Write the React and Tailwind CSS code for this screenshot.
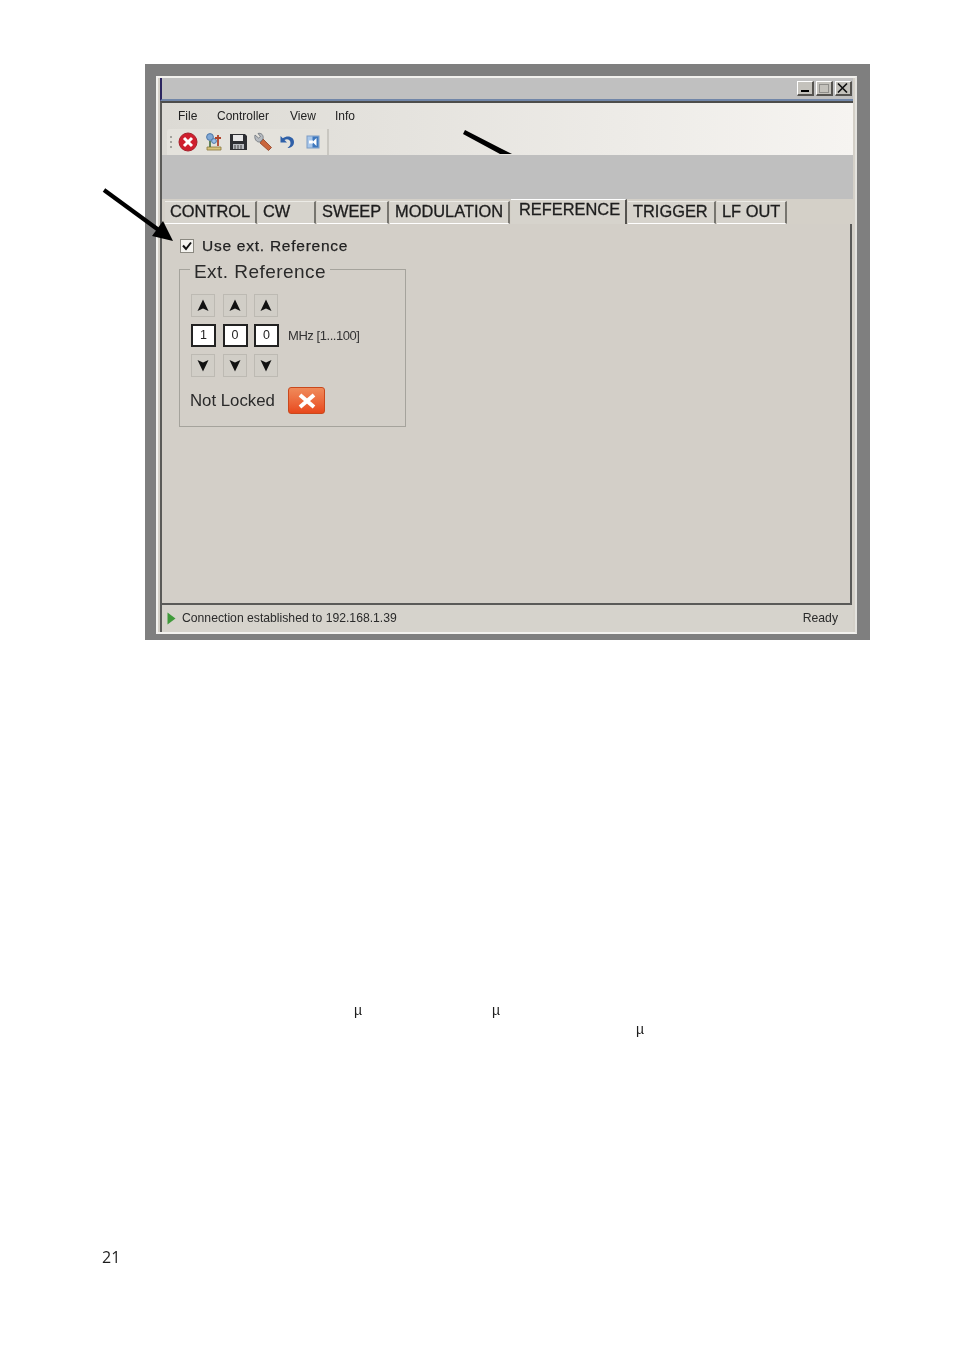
import React from "react";

const ui = { fontFamily: '"Liberation Sans", Arial, sans-serif' };

function Tab({ label, w, active, pl = "pl-[5px]" }) {
  return (
    <div
      className={`flex shrink-0 items-center ${pl} ${
        active
          ? "h-[27px] -mt-[2px] self-start bg-[#d6d3cc] border-r-2 border-r-[#55534f] border-t border-t-white pb-[8px]"
          : "h-[23px] bg-[#d6d3cc] border-r-2 border-r-[#77756f] border-t border-t-[#ecebe6] border-b border-b-white pb-[2px]"
      } text-[16.4px] text-[#1d1d1d] [-webkit-text-stroke:0.3px_#1d1d1d]`}
      style={{ width: w }}
    >
      {label}
    </div>
  );
}

function Arrow({ down }) {
  return (
    <div className="flex h-[23px] w-[24px] items-center justify-center border border-[#bdbab3] bg-[#d1cec7]">
      <svg width="12" height="13" viewBox="0 0 12 13">
        <path
          d={down ? "M0.5 1 L6 3.5 L11.5 1 L6 12.5 Z" : "M0.5 12 L6 9.5 L11.5 12 L6 0.5 Z"}
          fill="#111"
        />
      </svg>
    </div>
  );
}

function Digit({ v }) {
  return (
    <div className="flex h-[23px] w-[25px] items-center justify-center border-2 border-[#222] bg-white text-[12.5px] text-[#222]">
      {v}
    </div>
  );
}

function WinBtn({ children }) {
  return (
    <div className="flex h-[15px] w-[17.5px] items-center justify-center border-r-2 border-b-2 border-r-[#55534f] border-b-[#55534f] border-t border-l border-t-white border-l-white bg-[#c4c2bc]">
      {children}
    </div>
  );
}

function Toolbar() {
  return (
    <div className="flex h-[26px] w-[162px] items-center gap-[5px] rounded-tl-[3px] border-r-2 border-r-[#c9c7c1] bg-[#e4e2dc] pl-[2px]">
      <svg width="4" height="18" viewBox="0 0 4 18">
        <circle cx="2" cy="4" r="1" fill="#8c8b87" />
        <circle cx="2" cy="9" r="1" fill="#8c8b87" />
        <circle cx="2" cy="14" r="1" fill="#8c8b87" />
      </svg>
      <svg width="20" height="20" viewBox="0 0 20 20">
        <circle cx="10" cy="10" r="9" fill="#cf1f2e" stroke="#a5202a" />
        <path d="M6 6 L14 14 M14 6 L6 14" stroke="#fff" strokeWidth="3" />
      </svg>
      <svg width="20" height="20" viewBox="0 0 20 20" className="ml-[1px]">
        <circle cx="6" cy="5" r="3.4" fill="#7fa8d6" stroke="#4f78a8" />
        <circle cx="10" cy="9" r="2.4" fill="#9cc0e6" stroke="#4f78a8" />
        <path d="M14 3 V14 M11 6 H17" stroke="#b0442c" strokeWidth="1.8" />
        <path d="M3 18 H17 V15 H3 Z" fill="#d8c27a" stroke="#8b7a3c" strokeWidth="0.8" />
        <path d="M6 9 V15" stroke="#3e6b3a" strokeWidth="1.6" />
      </svg>
      <svg width="19" height="18" viewBox="0 0 19 18">
        <path d="M1 1 H16 L18 3 V17 H1 Z" fill="#2d2f33" />
        <rect x="4" y="2" width="10" height="6" fill="#e8e8e8" />
        <rect x="4" y="11" width="11" height="5" fill="#b8bbc0" />
        <path d="M6 12 V16 M9 12 V16 M12 12 V16" stroke="#444" />
      </svg>
      <svg width="20" height="20" viewBox="0 0 20 20">
        <path d="M7 11 L15.5 18.5 L18.5 15.5 L10 7 Z" fill="#c9653c" stroke="#8f3f22" strokeWidth="0.8" />
        <path d="M2 3 L5.5 6 L7.5 4.5 L5 1.5 C8 0.5 11 3 10 7 L7 10 C3.5 10.5 1 7 2 3 Z" fill="#b5bac0" stroke="#6c7278" strokeWidth="0.8" />
      </svg>
      <svg width="16" height="16" viewBox="0 0 16 16" className="ml-[1px]">
        <path d="M1.5 2 V8.5 H8 L5.5 6 C8 4.5 11.5 5.5 11.5 9 C11.5 11 10.5 12.5 8.5 14 C12.5 14 15 11.5 15 8 C15 3 9 0.5 3.8 4.2 Z" fill="#2f60a8" />
      </svg>
      <svg width="14" height="14" viewBox="0 0 14 14" className="ml-[6px]">
        <rect x="1" y="1" width="12" height="12" fill="#a8c7ea" stroke="#7d9cc4" />
        <rect x="6.5" y="1.5" width="6" height="11" fill="#3f78bd" />
        <path d="M10.5 3 L6.5 7 L10.5 11 Z M3 5.5 H7 V8.5 H3 Z" fill="#fff" />
      </svg>
    </div>
  );
}

export default function App() {
  return (
    <div className="relative h-[1348px] w-[954px] overflow-hidden bg-white" style={ui}>
      <div className="ml-[145px] h-[64px]" />
      <div className="ml-[145px] h-[576px] w-[725px] bg-[#7f7f7f] pl-[11px] pt-[12px]">
        <div className="flex h-[558px] w-[701px] flex-col border-2 border-[#f2f1ee] border-r-[#e4e3df] bg-[#d4d0c8] blur-[0.5px]">
          {/* title bar */}
          <div className="ml-[2px] mr-[2px] flex h-[23px] shrink-0 items-center justify-end gap-[1.5px] border-b-2 border-l-2 border-b-[#7186a8] border-l-[#2b2560] bg-[#c0c0c0] pr-[1px]">
            <WinBtn>
              <div className="mt-[6px] h-[2px] w-[8px] bg-black" />
            </WinBtn>
            <WinBtn>
              <div className="h-[9px] w-[10px] border border-[#8f8e8a]" />
            </WinBtn>
            <WinBtn>
              <svg width="11" height="10" viewBox="0 0 11 10">
                <path d="M1 0.5 L10 9.5 M10 0.5 L1 9.5" stroke="#111" strokeWidth="1.6" />
              </svg>
            </WinBtn>
          </div>
          {/* body */}
          <div className="ml-[2px] mr-[2px] flex min-h-0 flex-1 flex-col border-l-2 border-t-2 border-l-[#5a5a58] border-t-[#4d4d4b]">
            {/* menu */}
            <div className="h-[52px] shrink-0 bg-gradient-to-r from-[#dcdad4] to-[#f6f4f1]">
              <div className="flex h-[26px] items-center text-[12px] text-[#222]">
                <span className="ml-[16px] w-[39px]">File</span>
                <span className="w-[73px]">Controller</span>
                <span className="w-[45px]">View</span>
                <span>Info</span>
              </div>
              <div className="pl-[5px]">
                <Toolbar />
              </div>
            </div>
            <div className="h-[44px] shrink-0 bg-[#bfbfbf]" />
            {/* tabs */}
            <div className="flex h-[25px] shrink-0 items-start gap-[1px] bg-[#d4d0c8] pl-[3px] pt-[2px]">
              <Tab label="CONTROL" w={92} />
              <Tab label="CW" w={58} />
              <Tab label="SWEEP" w={72} />
              <Tab label="MODULATION" w={120} />
              <Tab label="REFERENCE" w={116} pl="pl-[8px]" active />
              <Tab label="TRIGGER" w={88} />
              <Tab label="LF OUT" w={70} />
            </div>
            {/* content */}
            <div className="mr-[1px] flex min-h-0 flex-1 flex-col border-b-2 border-r-2 border-b-[#5a5a58] border-r-[#5a5a58] bg-[#d3cfc8] pl-[17px] pt-[13px]">
              <div className="flex h-[17px] items-center">
                <div className="ml-[1px] flex h-[14px] w-[14px] items-center justify-center border border-[#8a8880] bg-[#f4f3ef]">
                  <svg width="10" height="10" viewBox="0 0 10 10">
                    <path d="M1 4.5 L4 8 L9 1.5" fill="none" stroke="#111" strokeWidth="2" />
                  </svg>
                </div>
                <span className="ml-[8px] text-[15.5px] tracking-[0.75px] text-[#222] [-webkit-text-stroke:0.25px_#222]">
                  Use ext. Reference
                </span>
              </div>
              <fieldset className="mt-[1px] h-[172px] w-[227px] border border-[#a5a39c] pl-[11px]">
                <legend className="-ml-[1px] px-[4px] pt-[6px] text-[19px] leading-[22px] tracking-[0.45px] text-[#2a2a2a]">
                  Ext. Reference
                </legend>
                <div className="mt-[11px] flex gap-[7.5px]">
                  <Arrow />
                  <Arrow />
                  <Arrow />
                </div>
                <div className="mt-[7px] flex items-center gap-[6.5px]">
                  <Digit v="1" />
                  <Digit v="0" />
                  <Digit v="0" />
                  <span className="ml-[2.5px] text-[13px] tracking-[-0.45px] text-[#333]">MHz [1...100]</span>
                </div>
                <div className="mt-[7px] flex gap-[7.5px]">
                  <Arrow down />
                  <Arrow down />
                  <Arrow down />
                </div>
                <div className="mt-[10px] flex items-center">
                  <span className="-ml-[1px] w-[98px] text-[16.8px] text-[#2a2a2a]">Not Locked</span>
                  <div className="flex h-[27px] w-[37px] items-center justify-center rounded-[3px] border border-[#c9481c] bg-gradient-to-b from-[#ef8a5a] to-[#e8471a]">
                    <svg width="20" height="16" viewBox="0 0 20 16">
                      <path d="M3 2 L17 14 M17 2 L3 14" stroke="#fff" strokeWidth="4" />
                    </svg>
                  </div>
                </div>
              </fieldset>
            </div>
            {/* status */}
            <div className="flex h-[27px] shrink-0 items-center bg-[#d6d3cc] pl-[5px] pr-[15px] text-[12.2px] text-[#2a2a2a]">
              <svg width="9" height="13" viewBox="0 0 9 13">
                <path d="M0.5 0.5 L8.5 6.5 L0.5 12.5 Z" fill="#3f9a3a" />
              </svg>
              <span className="ml-[6px]">Connection established to 192.168.1.39</span>
              <span className="ml-auto">Ready</span>
            </div>
          </div>
        </div>
      </div>

      {/* text left over on the page */}
      <div className="mt-[361px] h-[19px] text-[14px] leading-[19px] text-[#111] opacity-95">
        <span className="ml-[354px]">µ</span>
        <span className="ml-[130px]">µ</span>
      </div>
      <div className="h-[19px] text-[14px] leading-[19px] text-[#111] opacity-95">
        <span className="ml-[636px]">µ</span>
      </div>
      <div className="ml-[102px] mt-[208px] text-[16px] leading-[20px] text-[#111] opacity-95" style={{ fontFamily: '"Open Sans", sans-serif' }}>
        21
      </div>

      {/* pointer arrows drawn over the screenshot */}
      <svg className="absolute left-0 top-0" width="954" height="260" viewBox="0 0 954 260">
        <path d="M104 190 L160 231" stroke="#000" strokeWidth="4.2" />
        <path d="M173 241 L152 236 L163 221 Z" fill="#000" />
        <path d="M465 130 L500 148 L512 154 L500 154 L463 134 Z" fill="#000" />
      </svg>
    </div>
  );
}
